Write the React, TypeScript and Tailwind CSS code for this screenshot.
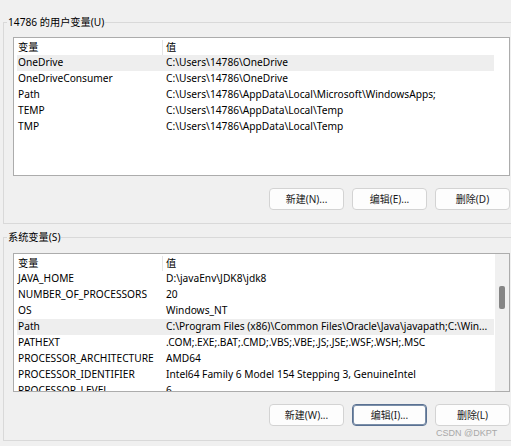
import React from 'react';

const userVars = [
  ['OneDrive', 'C:\\Users\\14786\\OneDrive'],
  ['OneDriveConsumer', 'C:\\Users\\14786\\OneDrive'],
  ['Path', 'C:\\Users\\14786\\AppData\\Local\\Microsoft\\WindowsApps;'],
  ['TEMP', 'C:\\Users\\14786\\AppData\\Local\\Temp'],
  ['TMP', 'C:\\Users\\14786\\AppData\\Local\\Temp'],
];

const sysVars = [
  ['JAVA_HOME', 'D:\\javaEnv\\JDK8\\jdk8'],
  ['NUMBER_OF_PROCESSORS', '20'],
  ['OS', 'Windows_NT'],
  ['Path', 'C:\\Program Files (x86)\\Common Files\\Oracle\\Java\\javapath;C:\\Win...'],
  ['PATHEXT', '.COM;.EXE;.BAT;.CMD;.VBS;.VBE;.JS;.JSE;.WSF;.WSH;.MSC'],
  ['PROCESSOR_ARCHITECTURE', 'AMD64'],
  ['PROCESSOR_IDENTIFIER', 'Intel64 Family 6 Model 154 Stepping 3, GenuineIntel'],
  ['PROCESSOR_LEVEL', '6'],
];

function VarList({ rows, selected, scroll }: { rows: string[][]; selected: number; scroll?: boolean }) {
  return (
    <div className="flex w-[497px] h-[139px] border border-[#acacac] bg-white overflow-hidden">
      <div className="flex-1 pl-[3px] overflow-hidden">
        <div className="flex w-[477px] h-[17px] pt-[2px] items-center">
          <div className="w-[146px] h-full pl-[1px] flex items-center border-r border-[#e5e5e5]">变量</div>
          <div className="pl-[3px]">值</div>
        </div>
        {rows.map(([name, value], i) => (
          <div
            key={name + i}
            className={`flex w-[477px] h-[16px] items-center whitespace-nowrap ${i === selected ? 'bg-[#eeeeee]' : ''}`}
          >
            <div className="w-[146px] pl-[1px] overflow-hidden">{name}</div>
            <div className="flex-1 pl-[3px] overflow-hidden">{value}</div>
          </div>
        ))}
      </div>
      {scroll && (
        <div className="w-[14px] bg-[#f0f0f0] pt-[32px] flex justify-center">
          <div className="w-[6px] h-[23px] rounded-[2px] bg-[#858585]" />
        </div>
      )}
    </div>
  );
}

function Btn({ label, focused }: { label: string; focused?: boolean }) {
  return (
    <button
      className={`w-[75px] h-[22px] rounded-[4px] bg-[#fdfdfd] text-[10px] leading-none text-[#1a1a1a] ${
        focused ? 'border border-[#5a7192] shadow-[inset_0_0_0_1px_#7a8ea8]' : 'border border-[#d3d3d3]'
      }`}
    >
      {label}
    </button>
  );
}

function Group({
  title,
  rows,
  selected,
  scroll,
  buttons,
  focusIdx,
  box,
  inner,
}: {
  title: string;
  rows: string[][];
  selected: number;
  scroll?: boolean;
  buttons: string[];
  focusIdx?: number;
  box: string;
  inner: string;
}) {
  return (
    <fieldset className={`ml-[3px] w-[530px] border border-[#d9d9d9] ${box}`}>
      <legend className="ml-[3px] px-[1px] leading-[16px]">{title}</legend>
      <div className={`pl-[9px] ${inner}`}>
        <VarList rows={rows} selected={selected} scroll={scroll} />
        <div className="w-[497px] flex justify-end gap-[8px] mt-[12px]">
          {buttons.map((b, i) => (
            <Btn key={b} label={b} focused={i === focusIdx} />
          ))}
        </div>
      </div>
    </fieldset>
  );
}

export default function App() {
  return (
    <div
      className="relative w-[511px] h-[446px] bg-[#f0f0f0] overflow-hidden text-[10.2px] text-black"
      style={{ fontFamily: '"Noto Sans", "Noto Sans CJK SC", sans-serif' }}
    >
      <Group
        title="14786 的用户变量(U)"
        rows={userVars}
        selected={0}
        buttons={['新建(N)...', '编辑(E)...', '删除(D)']}
        box="mt-[14px]"
        inner="pt-[7px] pb-[13px]"
      />
      <Group
        title="系统变量(S)"
        rows={sysVars}
        selected={3}
        scroll
        buttons={['新建(W)...', '编辑(I)...', '删除(L)']}
        focusIdx={1}
        box="mt-[5px]"
        inner="pt-[8px] pb-[14px]"
      />
      <div
        className="absolute left-[436px] top-[425px] whitespace-nowrap leading-[16px] text-[9px] text-[#a8a8a8]"
        style={{ fontFamily: '"Liberation Sans", Arial, sans-serif' }}
      >
        CSDN @DKPT
      </div>
    </div>
  );
}
